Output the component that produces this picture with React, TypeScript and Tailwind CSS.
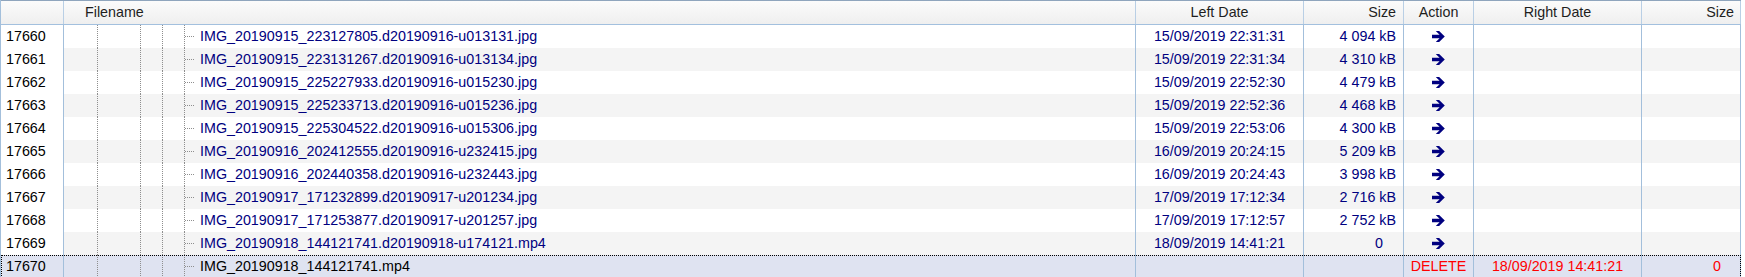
import React from 'react';

type Row = {
  id: number;
  name: string;
  leftDate?: string;
  leftSize?: string;
  action: 'copy' | 'delete';
  rightDate?: string;
  rightSize?: string;
};

const rows: Row[] = [
  { id: 17660, name: 'IMG_20190915_223127805.d20190916-u013131.jpg', leftDate: '15/09/2019 22:31:31', leftSize: '4 094 kB', action: 'copy' },
  { id: 17661, name: 'IMG_20190915_223131267.d20190916-u013134.jpg', leftDate: '15/09/2019 22:31:34', leftSize: '4 310 kB', action: 'copy' },
  { id: 17662, name: 'IMG_20190915_225227933.d20190916-u015230.jpg', leftDate: '15/09/2019 22:52:30', leftSize: '4 479 kB', action: 'copy' },
  { id: 17663, name: 'IMG_20190915_225233713.d20190916-u015236.jpg', leftDate: '15/09/2019 22:52:36', leftSize: '4 468 kB', action: 'copy' },
  { id: 17664, name: 'IMG_20190915_225304522.d20190916-u015306.jpg', leftDate: '15/09/2019 22:53:06', leftSize: '4 300 kB', action: 'copy' },
  { id: 17665, name: 'IMG_20190916_202412555.d20190916-u232415.jpg', leftDate: '16/09/2019 20:24:15', leftSize: '5 209 kB', action: 'copy' },
  { id: 17666, name: 'IMG_20190916_202440358.d20190916-u232443.jpg', leftDate: '16/09/2019 20:24:43', leftSize: '3 998 kB', action: 'copy' },
  { id: 17667, name: 'IMG_20190917_171232899.d20190917-u201234.jpg', leftDate: '17/09/2019 17:12:34', leftSize: '2 716 kB', action: 'copy' },
  { id: 17668, name: 'IMG_20190917_171253877.d20190917-u201257.jpg', leftDate: '17/09/2019 17:12:57', leftSize: '2 752 kB', action: 'copy' },
  { id: 17669, name: 'IMG_20190918_144121741.d20190918-u174121.mp4', leftDate: '18/09/2019 14:41:21', leftSize: '0', action: 'copy' },
  { id: 17670, name: 'IMG_20190918_144121741.mp4', action: 'delete', rightDate: '18/09/2019 14:41:21', rightSize: '0' },
];

// thick navy arrow used in the Action column
function CopyArrow() {
  return (
    <svg width="13" height="11" viewBox="0 0 12 10" className="block">
      <polygon
        points="0,3.4 7,3.4 3.5,0 6.6,0 11.8,5 6.6,10 3.5,10 7,6.6 0,6.6"
        fill="#000080"
      />
    </svg>
  );
}

// dotted tree guides in the filename column
function TreeLines() {
  const xs = [33.5, 76.5, 98.5, 120.5];
  return (
    <svg width="136" height="23" className="block shrink-0">
      {xs.map((x) => (
        <line key={x} x1={x} y1="0" x2={x} y2="23" stroke="#8e8e8e" strokeWidth="1" strokeDasharray="1 1" />
      ))}
      <line x1="121" y1="11.5" x2="131" y2="11.5" stroke="#8e8e8e" strokeWidth="1" strokeDasharray="1 1" />
    </svg>
  );
}

function Size({ value }: { value: string }) {
  // plain "0" sits a little left of the "kB" values
  return <span className={value === '0' ? 'mr-[13px]' : ''}>{value}</span>;
}

export default function App() {
  return (
    <div className="w-[1745px] h-[277px] overflow-hidden bg-white text-[14.3px] leading-none" style={{ fontFamily: '"Liberation Sans", Arial, sans-serif' }}>
      <div className="w-[1741px] border-l border-[#a3bfdb]">
        {/* header */}
        <div className="flex h-[25px] border-t border-b border-t-[#8fa5bd] border-b-[#a3c0de] bg-gradient-to-b from-[#fbfbfb] to-[#efefef] text-[#1e1e1e]">
          <div className="w-[63px] border-r border-[#b9cfe5]" />
          <div className="w-[1072px] border-r border-[#b9cfe5] flex items-center pl-[21px]">Filename</div>
          <div className="w-[168px] border-r border-[#b9cfe5] flex items-center justify-center">Left Date</div>
          <div className="w-[100px] border-r border-[#b9cfe5] flex items-center justify-end pr-[7px]">Size</div>
          <div className="w-[70px] border-r border-[#b9cfe5] flex items-center justify-center">Action</div>
          <div className="w-[168px] border-r border-[#b9cfe5] flex items-center justify-center">Right Date</div>
          <div className="w-[99px] border-r border-[#b9cfe5] flex items-center justify-end pr-[6px]">Size</div>
        </div>

        {/* rows */}
        {rows.map((r, i) => {
          const selected = r.action === 'delete';
          const rowBg = selected ? 'bg-[#dfe3f1]' : i % 2 === 1 ? 'bg-[#f4f4f4]' : 'bg-white';
          return (
            <div
              key={r.id}
              className={`flex h-[23px] ${rowBg} ${selected ? 'outline-1 outline-dotted outline-black -outline-offset-1' : ''}`}
            >
              <div className={`w-[63px] border-r border-[#a3bfdb] flex items-center pl-[5px] text-black ${selected ? '' : 'bg-white'}`}>
                {r.id}
              </div>
              <div className={`w-[1072px] border-r border-[#a3bfdb] flex items-center ${selected ? 'text-black' : 'text-[#000080]'}`}>
                <TreeLines />
                <span className="whitespace-nowrap">{r.name}</span>
              </div>
              <div className="w-[168px] border-r border-[#a3bfdb] flex items-center justify-center text-[#000080]">
                {r.leftDate}
              </div>
              <div className="w-[100px] border-r border-[#a3bfdb] flex items-center justify-end pr-[7px] text-[#000080]">
                {r.leftSize && <Size value={r.leftSize} />}
              </div>
              <div className="w-[70px] border-r border-[#a3bfdb] flex items-center justify-center">
                {selected ? <span className="text-[#ff0000]">DELETE</span> : <CopyArrow />}
              </div>
              <div className="w-[168px] border-r border-[#a3bfdb] flex items-center justify-center text-[#ff0000]">
                {r.rightDate}
              </div>
              <div className="w-[99px] border-r border-[#a3bfdb] flex items-center justify-end pr-[6px] text-[#ff0000]">
                {r.rightSize && <Size value={r.rightSize} />}
              </div>
            </div>
          );
        })}
      </div>
    </div>
  );
}
